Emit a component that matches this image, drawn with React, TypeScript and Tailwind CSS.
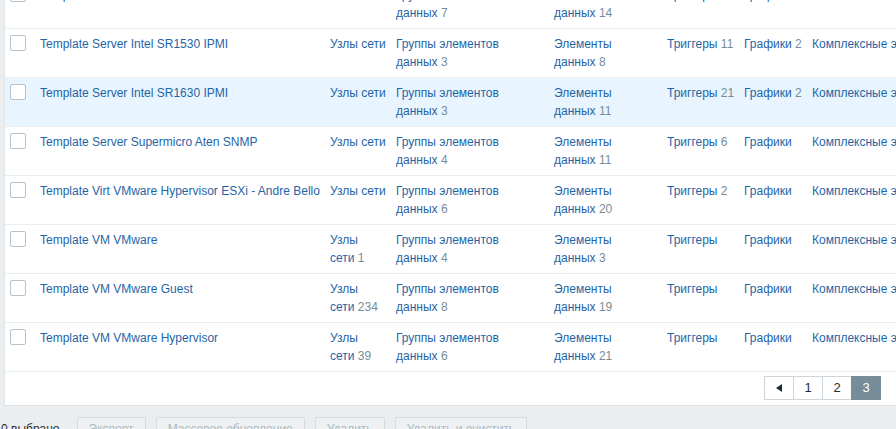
import React from "react";

type Row = {
  name: string;
  hosts: number | null;
  groups: number;
  items: number;
  triggers: number | null;
  graphs: number | null;
  selected?: boolean;
};

const rows: Row[] = [
  { name: "Template Server IBM IMM SNMP", hosts: null, groups: 7, items: 14, triggers: 9, graphs: 2 },
  { name: "Template Server Intel SR1530 IPMI", hosts: null, groups: 3, items: 8, triggers: 11, graphs: 2 },
  { name: "Template Server Intel SR1630 IPMI", hosts: null, groups: 3, items: 11, triggers: 21, graphs: 2, selected: true },
  { name: "Template Server Supermicro Aten SNMP", hosts: null, groups: 4, items: 11, triggers: 6, graphs: null },
  { name: "Template Virt VMware Hypervisor ESXi - Andre Bello", hosts: null, groups: 6, items: 20, triggers: 2, graphs: null },
  { name: "Template VM VMware", hosts: 1, groups: 4, items: 3, triggers: null, graphs: null },
  { name: "Template VM VMware Guest", hosts: 234, groups: 8, items: 19, triggers: null, graphs: null },
  { name: "Template VM VMware Hypervisor", hosts: 39, groups: 6, items: 21, triggers: null, graphs: null },
];

// ссылка + счётчик; first/second — принудительный перенос как в оригинале
function Link({ first, second, count }: { first: string; second?: string; count: number | null }) {
  const num = count !== null && <span className="text-[#768d99]"> {count}</span>;
  if (!second) {
    return (
      <span className="whitespace-nowrap">
        <span className="text-[#1f65a6]">{first}</span>
        {num}
      </span>
    );
  }
  return (
    <div className="whitespace-nowrap">
      <div className="text-[#1f65a6]">{first}</div>
      <div>
        <span className="text-[#1f65a6]">{second}</span>
        {num}
      </div>
    </div>
  );
}

function Cell({ children }: { children?: React.ReactNode }) {
  return <div className="px-[5px] pt-[6px] pb-[6px] min-w-0">{children}</div>;
}

function TemplateRow({ r }: { r: Row }) {
  return (
    <div
      className={`grid grid-cols-[30px_290px_66px_158px_113px_77px_68px_200px] h-[49px] border-b border-[#ebeef0] ${
        r.selected ? "bg-[#e8f5ff]" : "bg-white"
      }`}
    >
      <Cell>
        <div className="w-4 h-4 border border-[#b8c2c7] rounded-[2px] bg-white" />
      </Cell>
      <Cell>
        <span className="text-[#1f65a6] whitespace-nowrap">{r.name}</span>
      </Cell>
      <Cell>
        {r.hosts === null ? (
          <Link first="Узлы сети" count={null} />
        ) : (
          <Link first="Узлы" second="сети" count={r.hosts} />
        )}
      </Cell>
      <Cell>
        <Link first="Группы элементов" second="данных" count={r.groups} />
      </Cell>
      <Cell>
        <Link first="Элементы" second="данных" count={r.items} />
      </Cell>
      <Cell>
        <Link first="Триггеры" count={r.triggers} />
      </Cell>
      <Cell>
        <Link first="Графики" count={r.graphs} />
      </Cell>
      <Cell>
        <span className="text-[#1f65a6] whitespace-nowrap">Комплексные экраны</span>
      </Cell>
    </div>
  );
}

function PageButton({ children, active }: { children: React.ReactNode; active?: boolean }) {
  return (
    <div
      className={`h-[24px] w-[30px] -ml-px first:ml-0 flex items-center justify-center border text-[13px] ${
        active ? "bg-[#768d99] text-white border-[#768d99]" : "bg-white text-[#1f2c33] border-[#ccd5d9]"
      }`}
    >
      {children}
    </div>
  );
}

function ActionButton({ children }: { children: React.ReactNode }) {
  return (
    <div className="h-[24px] px-[11px] flex items-center border border-[#d6dcdf] bg-[#eef0f2] text-[#acbbc2] rounded-[2px]">
      {children}
    </div>
  );
}

export default function App() {
  return (
    <div
      className="w-[896px] h-[429px] overflow-hidden bg-[#ebeef0] text-[12px] leading-[18px]"
      style={{ fontFamily: '"Liberation Sans", Arial, sans-serif' }}
    >
      <div className="ml-[4px] w-[894px] -mt-[21px] bg-white border border-[#dfe4e7] overflow-hidden">
        {rows.map((r) => (
          <TemplateRow key={r.name} r={r} />
        ))}
        <div className="flex justify-end pr-[16px] pt-[4px] pb-[5px]">
          <PageButton>
            <svg width="6" height="8" viewBox="0 0 6 8">
              <path d="M6 0 L0 4 L6 8 Z" fill="#1f2c33" />
            </svg>
          </PageButton>
          <PageButton>1</PageButton>
          <PageButton>2</PageButton>
          <PageButton active>3</PageButton>
        </div>
      </div>
      <div className="flex items-center pt-[11px] pl-[1px] text-[#1f2c33]">
        <span className="mr-[17px]">0 выбрано</span>
        <div className="flex gap-[10px]">
          <ActionButton>Экспорт</ActionButton>
          <ActionButton>Массовое обновление</ActionButton>
          <ActionButton>Удалить</ActionButton>
          <ActionButton>Удалить и очистить</ActionButton>
        </div>
      </div>
    </div>
  );
}
